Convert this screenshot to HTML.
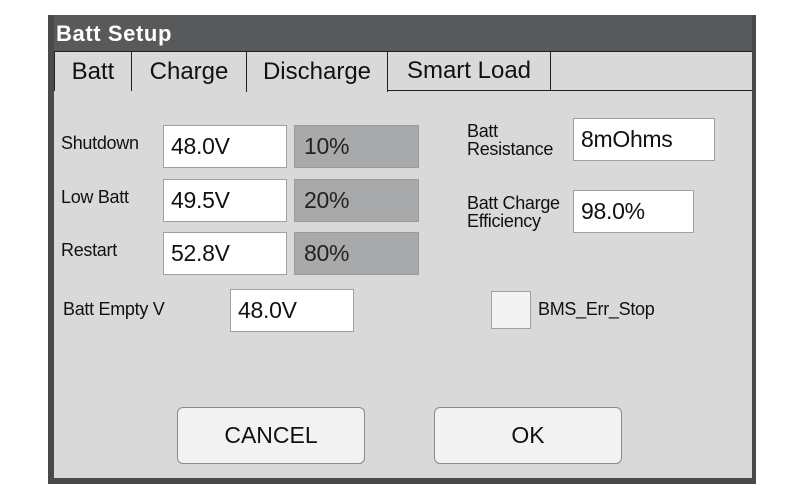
<!DOCTYPE html><html><head><style>
*{margin:0;padding:0;box-sizing:border-box}
body{width:795px;height:502px;background:#fff;position:relative;font-family:"Liberation Sans",sans-serif;overflow:hidden}
.a{position:absolute}
.in{position:absolute;background:#fff;border:1px solid #a0a0a0;font-size:23px;color:#111;padding-left:7px;display:flex;align-items:center;letter-spacing:-0.3px}
.gr{position:absolute;background:#a8a9ab;border:1px solid #9a9a9a;font-size:23px;color:#222;padding-left:9px;display:flex;align-items:center;letter-spacing:-0.3px}
.lb{position:absolute;font-size:18px;color:#111;letter-spacing:-0.3px;line-height:18px}
.tab{position:absolute;top:51px;height:40px;border:1px solid #222;border-bottom:none;font-size:24px;color:#111;display:flex;align-items:center;justify-content:center;background:#d9d9d9}
.btn{position:absolute;background:#f2f2f2;border:1px solid #8a8a8a;border-radius:6px;font-size:23px;color:#111;display:flex;align-items:center;justify-content:center}
</style></head><body>
<div class="a" style="left:48px;top:15px;width:708px;height:469px;background:#4a4a4c"></div>
<div class="a" style="left:54px;top:15px;width:698px;height:36px;background:#58595b;color:#fff;font-weight:bold;font-size:22px;letter-spacing:0.6px;padding-left:2px;line-height:38px">Batt Setup</div>
<div class="a" style="left:54px;top:51px;width:698px;height:427px;background:#d9d9d9"></div>
<div class="a" style="left:54px;top:90px;width:698px;height:1px;background:#222"></div>
<div class="a" style="left:54px;top:51px;width:698px;height:1px;background:#222"></div>
<div class="tab" style="left:54px;width:78px">Batt</div>
<div class="tab" style="left:131px;width:116px">Charge</div>
<div class="tab" style="left:246px;width:142px;height:41px;padding-bottom:1px">Discharge</div>
<div class="tab" style="left:387px;width:164px;border-bottom:1px solid #222">Smart Load</div>
<div class="lb" style="left:61px;top:134px">Shutdown</div>
<div class="lb" style="left:61px;top:188px">Low Batt</div>
<div class="lb" style="left:61px;top:241px">Restart</div>
<div class="lb" style="left:63px;top:300px">Batt Empty V</div>
<div class="in" style="left:163px;top:125px;width:124px;height:43px">48.0V</div>
<div class="in" style="left:163px;top:179px;width:124px;height:43px">49.5V</div>
<div class="in" style="left:163px;top:232px;width:124px;height:43px">52.8V</div>
<div class="in" style="left:230px;top:289px;width:124px;height:43px">48.0V</div>
<div class="gr" style="left:294px;top:125px;width:125px;height:43px">10%</div>
<div class="gr" style="left:294px;top:179px;width:125px;height:43px">20%</div>
<div class="gr" style="left:294px;top:232px;width:125px;height:43px">80%</div>
<div class="lb" style="left:467px;top:122px">Batt<br>Resistance</div>
<div class="lb" style="left:467px;top:194px">Batt Charge<br>Efficiency</div>
<div class="in" style="left:573px;top:118px;width:142px;height:43px">8mOhms</div>
<div class="in" style="left:573px;top:190px;width:121px;height:43px">98.0%</div>
<div class="a" style="left:491px;top:291px;width:40px;height:38px;background:#f3f3f3;border:1px solid #a0a0a0"></div>
<div class="lb" style="left:538px;top:300px">BMS_Err_Stop</div>
<div class="btn" style="left:177px;top:407px;width:188px;height:57px">CANCEL</div>
<div class="btn" style="left:434px;top:407px;width:188px;height:57px">OK</div>
</body></html>
